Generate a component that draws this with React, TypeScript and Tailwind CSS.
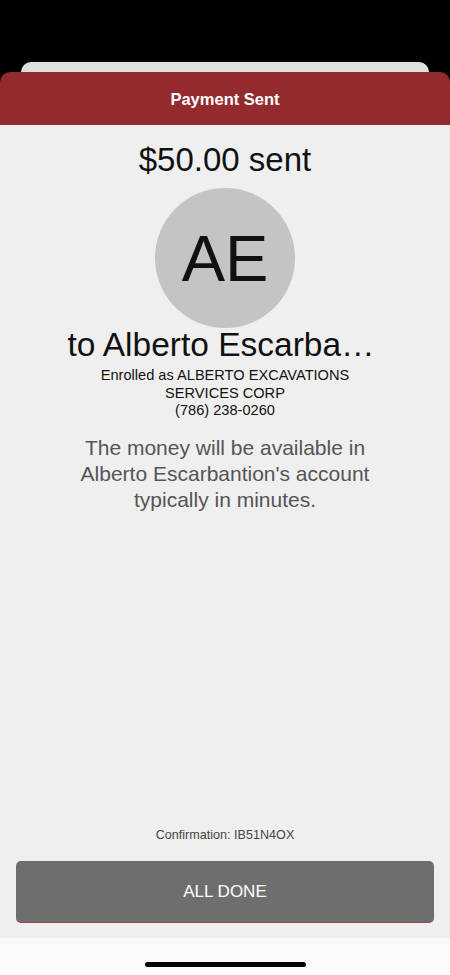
export default function App() {
  const font = { fontFamily: '"Liberation Sans", Arial, sans-serif' }

  return (
    <div className="w-[450px] h-[975px] bg-black flex flex-col overflow-hidden" style={font}>
      <div className="h-[62px] shrink-0" />
      <div className="mx-[21px] h-[10px] shrink-0 bg-[#dfdfdf] rounded-t-[10px]" />

      <div className="flex-1 flex flex-col rounded-t-[10px] overflow-hidden">
        <div className="h-[53px] shrink-0 bg-[#932a2e] flex items-center justify-center">
          <span className="text-white font-bold text-[16.5px] leading-[20px] mt-[1px]">Payment Sent</span>
        </div>

        <div className="flex-1 bg-[#efefef] flex flex-col items-center text-[#111]">
          <div className="mt-[16px] text-[33px] leading-[37px]">$50.00 sent</div>

          <div className="mt-[10px] w-[140px] h-[140px] rounded-full bg-[#c4c4c4] flex items-center justify-center">
            <span className="text-[65px] leading-[65px] mt-[1px]">AE</span>
          </div>

          <div className="text-[33.5px] leading-[33px] whitespace-nowrap mr-[8px]">to Alberto Escarba…</div>

          <div className="mt-[6px] text-[14.6px] leading-[17.5px] text-center">
            <div>Enrolled as ALBERTO EXCAVATIONS</div>
            <div>SERVICES CORP</div>
            <div>(786) 238-0260</div>
          </div>

          <div className="mt-[15px] text-[21px] leading-[26px] text-center text-[#555]">
            <div>The money will be available in</div>
            <div>Alberto Escarbantion's account</div>
            <div>typically in minutes.</div>
          </div>

          <div className="flex-1" />

          <div className="text-[12.6px] leading-[16px] text-[#444]">Confirmation: IB51N4OX</div>

          <button className="mt-[18px] mb-[15px] w-[418px] h-[62px] rounded-[5px] bg-[#6e6e6e] border-b-[1.5px] border-[#9a4b48] text-white text-[17px] flex items-center justify-center">
            ALL DONE
          </button>
        </div>

        <div className="h-[37px] shrink-0 bg-[#fafafa] flex justify-center">
          <div className="mt-[24px] w-[161px] h-[5px] rounded-full bg-black" />
        </div>
      </div>
    </div>
  )
}
